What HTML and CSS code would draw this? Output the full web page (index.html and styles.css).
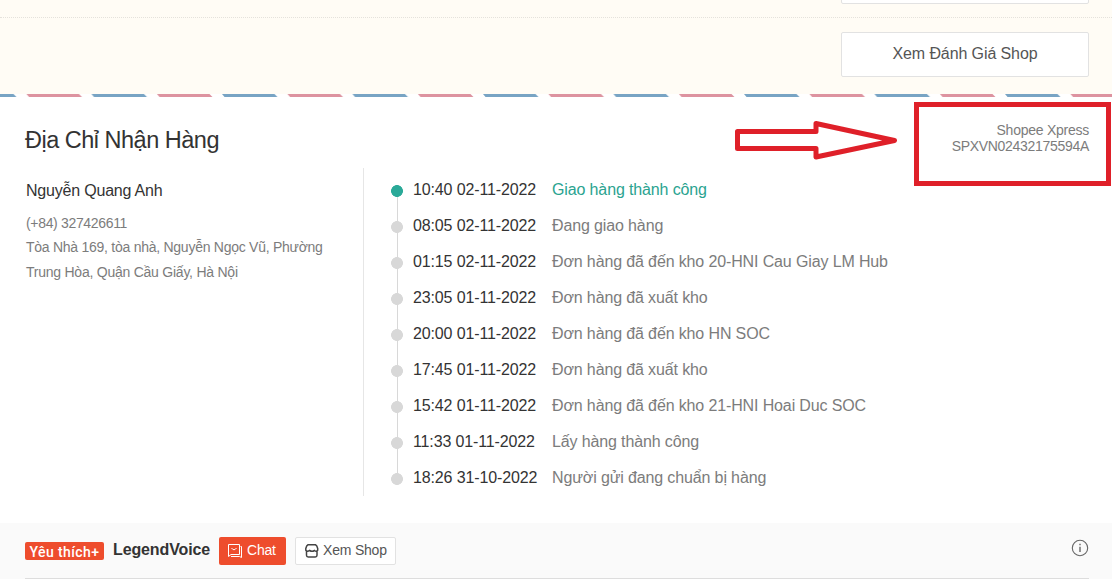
FILE: index.html
```html
<!DOCTYPE html>
<html lang="vi">
<head>
<meta charset="utf-8">
<title>Địa Chỉ Nhận Hàng</title>
<link rel="stylesheet" href="styles.css">
</head>
<body>
<main class="page">
  <section class="actions">
    <div class="action-row first"><div class="button"></div></div>
    <div class="action-row"><button class="button">Xem Đánh Giá Shop</button></div>
  </section>
  <svg class="stripe" width="1112" height="3">
    <defs>
      <pattern id="mail" x="-39" width="130.5" height="3" patternUnits="userSpaceOnUse">
        <path d="M0 0H52.5L55.5 3H2.5Z" fill="#78a4c4"/>
        <path d="M65.5 0H118L121 3H68Z" fill="#dd93a0"/>
      </pattern>
    </defs>
    <rect width="1112" height="3" fill="url(#mail)"/>
  </svg>
  <section class="delivery">
    <header class="delivery-head">
      <h1>Địa Chỉ Nhận Hàng</h1>
      <div class="carrier"><div class="carrier-name">Shopee Xpress</div><div class="tracking">SPXVN02432175594A</div></div>
    </header>
    <div class="delivery-body">
      <address class="address">
        <div class="name">Nguyễn Quang Anh</div>
        <div class="phone">(+84) 327426611</div>
        <div class="street">Tòa Nhà 169, tòa nhà, Nguyễn Ngọc Vũ, Phường</div>
        <div class="city">Trung Hòa, Quận Cầu Giấy, Hà Nội</div>
      </address>
      <ol class="timeline">
        <li class="done"><i></i><time>10:40 02-11-2022</time><span>Giao hàng thành công</span></li>
        <li><i></i><time>08:05 02-11-2022</time><span>Đang giao hàng</span></li>
        <li><i></i><time>01:15 02-11-2022</time><span>Đơn hàng đã đến kho 20-HNI Cau Giay LM Hub</span></li>
        <li><i></i><time>23:05 01-11-2022</time><span>Đơn hàng đã xuất kho</span></li>
        <li><i></i><time>20:00 01-11-2022</time><span>Đơn hàng đã đến kho HN SOC</span></li>
        <li><i></i><time>17:45 01-11-2022</time><span>Đơn hàng đã xuất kho</span></li>
        <li><i></i><time>15:42 01-11-2022</time><span>Đơn hàng đã đến kho 21-HNI Hoai Duc SOC</span></li>
        <li><i></i><time>11:33 01-11-2022</time><span>Lấy hàng thành công</span></li>
        <li><i></i><time>18:26 31-10-2022</time><span>Người gửi đang chuẩn bị hàng</span></li>
      </ol>
    </div>
    <svg class="arrow" width="166" height="44" viewBox="0 0 166 44">
      <path d="M4.5 11.5H83V3.5L161.500 20.500L83 37V28.500H4.500Z" fill="#fff" stroke="#df2029" stroke-width="5" stroke-linejoin="round"/>
    </svg>
    <div class="highlight"></div>
  </section>
  <footer class="shop">
    <div class="shop-inner">
      <span class="badge">Yêu thích+</span>
      <strong class="shop-name">LegendVoice</strong>
      <button class="chat">
        <svg width="15" height="14" viewBox="0 0 15 14" fill="none" stroke="#fff"><path d="M.5 .5H11.5V10.5H3L.5 12.5Z"/><path d="M3.5 4Q6 7.500 8.500 4M3 12.500H11.500L13.500 13.500V2.500H12.500"/></svg>
        <span>Chat</span>
      </button>
      <button class="visit">
        <svg width="14" height="14" viewBox="0 0 14 14" fill="none" stroke="#444" stroke-width="1.5"><path d="M3 .8H10.500Q12 1.500 12.700 4.500V6.300Q11.300 8 9.500 6.500Q7 8 4.700 6.500Q2.200 8 .8 6.300V4.500Q1.500 1.500 3 .8ZM1.500 7V11.300Q1.500 13 3.200 13H10.300Q12 13 12 11.300V7"/></svg>
        <span>Xem Shop</span>
      </button>
      <svg class="info" width="18" height="18" viewBox="0 0 18 18"><circle cx="9" cy="9" r="7.7" fill="none" stroke="#666" stroke-width="1.1"/><path d="M9 4.700V6.300M9 7.700V13" stroke="#666" stroke-width="1.4"/></svg>
    </div>
  </footer>
</main>
</body>
</html>
```
FILE: styles.css
```css
* { box-sizing: border-box; }
body { margin: 0; background: #fff; font-family: "Liberation Sans", Arial, sans-serif; color: #333; }
.page { width: 1112px; height: 579px; overflow: hidden; display: flex; flex-direction: column; }
.page > * { flex: none; }
button { font-family: inherit; padding: 0; }
.actions { height: 94px; background: #fffcf5; }
.action-row { display: flex; justify-content: flex-end; padding: 14px 23px 0 0; }
.action-row.first { height: 18px; padding-top: 0; align-items: flex-end; padding-bottom: 13px; border-bottom: 1px dotted #e5e2dc; }
.button { width: 248px; height: 45px; border: 1px solid #e2e2e2; border-radius: 2px; background: #fff; color: #555; font-size: 16px; letter-spacing: -.1px; padding-bottom: 2px; }
.stripe { display: block; }
.delivery { position: relative; height: 426px; }
.delivery-head { display: flex; justify-content: space-between; padding: 25px 23px 0 25px; height: 71px; }
h1 { margin: 0; font-size: 23.5px; line-height: 36px; font-weight: 400; letter-spacing: -.5px; }
.carrier { text-align: right; color: #7c7c7c; font-size: 14px; line-height: 16px; }
.carrier-name { letter-spacing: -.25px; }
.tracking { letter-spacing: -.3px; }
.delivery-body { display: flex; }
.address { width: 364px; height: 328px; padding: 11px 0 0 26px; border-right: 1px solid #e6e6e6; font-style: normal; font-size: 14px; line-height: 24.5px; color: #7c7c7c; white-space: nowrap; }
.name { font-size: 16px; color: #333; margin-bottom: 7px; letter-spacing: -.2px; }
.phone { letter-spacing: -.33px; }
.street { letter-spacing: -.26px; }
.city { letter-spacing: -.24px; }
.timeline { list-style: none; margin: 0; padding: 4px 0 0 27px; font-size: 16px; color: #7c7c7c; }
.timeline li { display: grid; grid-template-columns: 22px 139px auto; height: 36px; line-height: 36px; white-space: nowrap; letter-spacing: -.13px; }
.timeline i { width: 12px; background: radial-gradient(circle at 6px 19px, #d8d8d8 5.6px, transparent 6.2px), linear-gradient(#d8d8d8, #d8d8d8) 6px 0 / 1px 100% no-repeat; }
.timeline .done i { background: radial-gradient(circle at 6px 19px, #2aa998 5.6px, transparent 6.2px), linear-gradient(#d8d8d8, #d8d8d8) 6px 19px / 1px 17px no-repeat; }
.timeline li:last-child i { background: radial-gradient(circle at 6px 19px, #d8d8d8 5.6px, transparent 6.2px), linear-gradient(#d8d8d8, #d8d8d8) 6px 0 / 1px 19px no-repeat; }
time { color: #333; }
.done span { color: #2aa390; }
.arrow { position: absolute; left: 733px; top: 23px; }
.highlight { position: absolute; left: 914px; top: 5px; width: 197px; height: 84px; border: 5px solid #df2029; }
.shop { height: 56px; background: #fafafa; padding-left: 25px; padding-right: 23px; }
.shop-inner { height: 56px; display: flex; align-items: flex-start; padding-top: 14px; border-bottom: 1px solid #ddd; }
.badge { width: 79px; height: 18px; margin-top: 5px; border-radius: 2px; background: #ee4d2d; color: #fff; font-family: Roboto, sans-serif; font-size: 14px; font-weight: 500; letter-spacing: .4px; line-height: 20px; text-align: center; white-space: nowrap; }
.shop-name { width: 97px; margin: 3px 9px 0; font-size: 16px; line-height: 19px; letter-spacing: -.12px; white-space: nowrap; }
.chat, .visit { display: flex; height: 28px; align-items: center; gap: 4px; border-radius: 2px; font-size: 14px; letter-spacing: -.2px; white-space: nowrap; }
.chat { width: 67px; padding-left: 9px; border: 0; background: #ee4d2d; color: #fff; }
.visit { width: 101px; margin-left: 9px; padding-left: 9px; border: 1px solid #e2e2e2; background: #fff; color: #555; }
.chat span, .visit span { margin-top: -2px; }
.info { margin: 2px 0 0 auto; }
```
